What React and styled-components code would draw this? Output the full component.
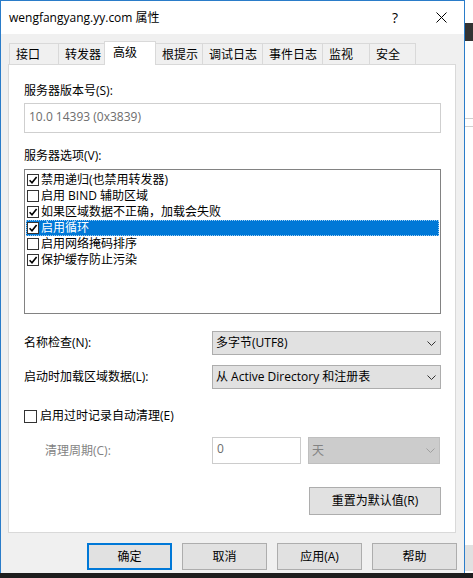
import React from "react";
import styled, { createGlobalStyle } from "styled-components";

const GlobalStyle = createGlobalStyle`
  html, body {
    margin: 0;
    padding: 0;
    background: #fff;
  }
  body {
    font-family: "Open Sans", "Noto Sans CJK SC", sans-serif;
    font-size: 12px;
    line-height: 16px;
    color: #000;
  }
`;

const Screen = styled.div`
  width: 473px;
  height: 578px;
  display: flex;
  flex-direction: column;
  overflow: hidden;
`;

const Desk = styled.div`
  display: flex;
  height: 573px;
`;

const Taskbar = styled.div`
  flex: 1;
  background: #1d1d1d;
`;

const Dialog = styled.div`
  width: 465px;
  box-sizing: border-box;
  border: 1px solid #2a7cc9;
  border-bottom: none;
  background: #f0f0f0;
  display: flex;
  flex-direction: column;
`;

const BackWindow = styled.div`
  flex: 1;
  background: #fff;
  display: flex;
  flex-direction: column;
`;

const BackBar = styled.div`
  height: ${(p) => p.$h}px;
  margin-top: ${(p) => p.$top}px;
  background: ${(p) => p.$bg};
`;

/* ---------- title bar ---------- */
const TitleBar = styled.div`
  height: 33px;
  background: #fff;
  display: flex;
  align-items: center;
  padding-left: 8px;
`;

const Title = styled.div`
  flex: 1;
  white-space: nowrap;
`;

const CaptionBtn = styled.div`
  width: 46px;
  height: 100%;
  display: flex;
  align-items: center;
  justify-content: center;
  font-size: 14px;
`;

/* ---------- tabs ---------- */
const TabStrip = styled.div`
  display: flex;
  align-items: flex-end;
  padding: 7px 0 0 8px;
  height: 23px;
`;

const Tab = styled.div`
  box-sizing: border-box;
  width: ${(p) => p.$w}px;
  height: ${(p) => (p.$active ? 24 : 21)}px;
  margin-left: ${(p) => (p.$first ? 0 : -1)}px;
  margin-bottom: ${(p) => (p.$active ? -1 : 0)}px;
  padding: ${(p) => (p.$active ? "3px 0 0 8px" : "3px 0 0 6px")};
  background: ${(p) => (p.$active ? "#fff" : "#f0f0f0")};
  border: 1px solid #d9d9d9;
  border-bottom: none;
  position: relative;
  z-index: ${(p) => (p.$active ? 2 : 1)};
  white-space: nowrap;
`;

const Panel = styled.div`
  margin-left: 7px;
  width: 448px;
  box-sizing: border-box;
  background: #fff;
  border: 1px solid #d9d9d9;
  padding: 18px 14px 17px 15px;
  display: flex;
  flex-direction: column;
`;

const Label = styled.div`
  height: 16px;
  margin-top: ${(p) => p.$mt || 0}px;
  color: ${(p) => (p.$disabled ? "#838383" : "#000")};
  padding-left: ${(p) => p.$indent || 0}px;
  white-space: nowrap;
`;

const TextBox = styled.div`
  box-sizing: border-box;
  height: 30px;
  margin-top: 4px;
  border: 1px solid #cfcfcf;
  padding: 5px 0 0 4px;
  color: #6d6d6d;
`;

/* ---------- list ---------- */
const ListBox = styled.div`
  box-sizing: border-box;
  height: 145px;
  margin-top: 5px;
  border: 1px solid #828282;
  padding: 2px 0 0 0;
`;

const ListRow = styled.div`
  height: 16px;
  display: flex;
  align-items: center;
  gap: 2px;
  margin: 0 1px;
  padding-left: 1px;
  box-sizing: border-box;
  background: ${(p) => (p.$sel ? "#0078d7" : "transparent")};
  color: ${(p) => (p.$sel ? "#fff" : "#000")};
  outline: ${(p) => (p.$sel ? "1px dotted #9ccdf3" : "none")};
  outline-offset: -1px;
  white-space: nowrap;
`;

const Box = styled.span`
  box-sizing: border-box;
  width: ${(p) => p.$size}px;
  height: ${(p) => p.$size}px;
  flex: none;
  border: 1px solid #333;
  background: #fff;
  display: inline-flex;
  align-items: center;
  justify-content: center;
`;

const Check = ({ checked, size = 12 }) => (
  <Box $size={size}>
    {checked && (
      <svg width={size - 2} height={size - 2} viewBox="0 0 10 10">
        <path d="M1.6 5.2 L4 7.8 L8.6 2" fill="none" stroke="#000" strokeWidth="1.6" />
      </svg>
    )}
  </Box>
);

/* ---------- form rows ---------- */
const FormRow = styled.div`
  display: flex;
  align-items: center;
  height: ${(p) => p.$h}px;
  margin-top: ${(p) => p.$mt}px;
`;

const RowLabel = styled.div`
  width: 188px;
  padding-left: ${(p) => p.$indent || 0}px;
  box-sizing: border-box;
  color: ${(p) => (p.$disabled ? "#838383" : "#000")};
  white-space: nowrap;
`;

const Select = styled.div`
  box-sizing: border-box;
  width: ${(p) => p.$w}px;
  height: 100%;
  margin-left: ${(p) => p.$ml || 0}px;
  background: ${(p) => (p.$disabled ? "#cccccc" : "#e1e1e1")};
  border: 1px solid ${(p) => (p.$disabled ? "#bfbfbf" : "#adadad")};
  color: ${(p) => (p.$disabled ? "#838383" : "#000")};
  display: flex;
  align-items: center;
  justify-content: space-between;
  padding: 0 4px 0 3px;
  white-space: nowrap;
`;

const Chevron = ({ color = "#333" }) => (
  <svg width="9" height="5" viewBox="0 0 9 5">
    <path d="M0.5 0.5 L4.5 4.5 L8.5 0.5" fill="none" stroke={color} strokeWidth="1" />
  </svg>
);

const EditBox = styled.div`
  box-sizing: border-box;
  width: 89px;
  height: 100%;
  border: 1px solid #cccccc;
  background: #fff;
  color: #6d6d6d;
  padding: 3px 0 0 4px;
`;

const CheckLine = styled.label`
  display: flex;
  align-items: center;
  gap: 3px;
  height: 16px;
  margin-top: 19px;
  white-space: nowrap;
`;

const Button = styled.div`
  box-sizing: border-box;
  width: ${(p) => p.$w}px;
  height: ${(p) => p.$h}px;
  background: #e1e1e1;
  border: ${(p) => (p.$default ? "2px solid #0078d7" : "1px solid #adadad")};
  display: flex;
  align-items: center;
  justify-content: center;
  white-space: nowrap;
`;

const ResetWrap = styled.div`
  display: flex;
  justify-content: flex-end;
  margin-top: 23px;
`;

const ButtonBar = styled.div`
  display: flex;
  justify-content: flex-end;
  gap: 10px;
  margin-top: 10px;
  padding-right: 7px;
`;

const tabs = [
  { label: "接口", w: 50 },
  { label: "转发器", w: 47 },
  { label: "高级", w: 52, active: true },
  { label: "根提示", w: 48 },
  { label: "调试日志", w: 61 },
  { label: "事件日志", w: 61 },
  { label: "监视", w: 48 },
  { label: "安全", w: 47 },
];

const options = [
  { text: "禁用递归(也禁用转发器)", checked: true },
  { text: "启用 BIND 辅助区域", checked: false },
  { text: "如果区域数据不正确，加载会失败", checked: true },
  { text: "启用循环", checked: true, sel: true },
  { text: "启用网络掩码排序", checked: false },
  { text: "保护缓存防止污染", checked: true },
];

export default function App() {
  return (
    <Screen>
      <GlobalStyle />
      <Desk>
        <Dialog>
          <TitleBar>
            <Title>wengfangyang.yy.com 属性</Title>
            <CaptionBtn>?</CaptionBtn>
            <CaptionBtn>
              <svg width="11" height="11" viewBox="0 0 11 11">
                <path d="M0.5 0.5 L10.5 10.5 M10.5 0.5 L0.5 10.5" stroke="#000" strokeWidth="1" />
              </svg>
            </CaptionBtn>
          </TitleBar>

          <TabStrip>
            {tabs.map((t, i) => (
              <Tab key={t.label} $w={t.w} $active={t.active} $first={i === 0}>
                {t.label}
              </Tab>
            ))}
          </TabStrip>

          <Panel>
            <Label>服务器版本号(S):</Label>
            <TextBox>10.0 14393 (0x3839)</TextBox>

            <Label $mt={15}>服务器选项(V):</Label>
            <ListBox>
              {options.map((o) => (
                <ListRow key={o.text} $sel={o.sel}>
                  <Check checked={o.checked} />
                  {o.text}
                </ListRow>
              ))}
            </ListBox>

            <FormRow $h={24} $mt={17}>
              <RowLabel>名称检查(N):</RowLabel>
              <Select $w={229}>
                多字节(UTF8)
                <Chevron />
              </Select>
            </FormRow>

            <FormRow $h={24} $mt={10}>
              <RowLabel>启动时加载区域数据(L):</RowLabel>
              <Select $w={229}>
                从 Active Directory 和注册表
                <Chevron />
              </Select>
            </FormRow>

            <CheckLine>
              <Check size={13} />
              启用过时记录自动清理(E)
            </CheckLine>

            <FormRow $h={27} $mt={13}>
              <RowLabel $indent={21} $disabled>
                清理周期(C):
              </RowLabel>
              <EditBox>0</EditBox>
              <Select $w={132} $ml={7} $disabled>
                天
                <Chevron color="#a0a0a0" />
              </Select>
            </FormRow>

            <ResetWrap>
              <Button $w={132} $h={28}>
                重置为默认值(R)
              </Button>
            </ResetWrap>
          </Panel>

          <ButtonBar>
            <Button $w={85} $h={27} $default>
              确定
            </Button>
            <Button $w={85} $h={27}>
              取消
            </Button>
            <Button $w={85} $h={27}>
              应用(A)
            </Button>
            <Button $w={85} $h={27}>
              帮助
            </Button>
          </ButtonBar>
        </Dialog>

        <BackWindow>
          <BackBar $top={23} $h={18} $bg="#333" />
          <BackBar $top={77} $h={1} $bg="#d0d0d0" />
          <BackBar $top={7} $h={1} $bg="#d0d0d0" />
          <BackBar $top={418} $h={26} $bg="#e1e1e1" />
        </BackWindow>
      </Desk>
      <Taskbar />
    </Screen>
  );
}
